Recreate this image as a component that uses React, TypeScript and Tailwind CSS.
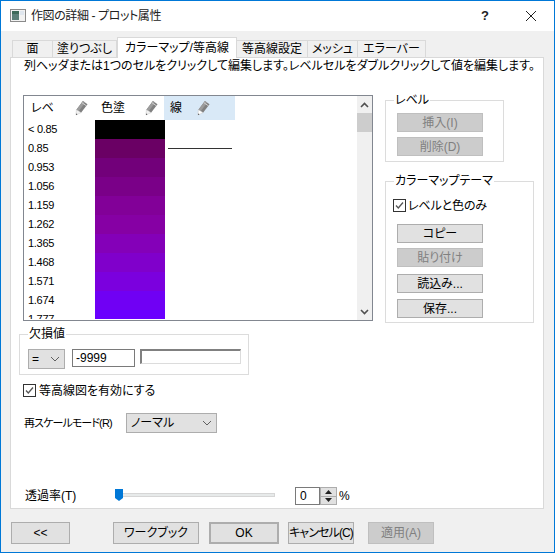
import React from "react";

function Pencil({ faded }: { faded?: boolean }) {
  return (
    <svg width="13" height="16" viewBox="0 0 14 16" className="block">
      <path d="M8.5 0.5 L13.5 4 L6.5 13 L1.5 9.8 Z" fill="#808080" />
      <path d="M8.5 0.5 L11 2.2 L4 11.5 L1.5 9.8 Z" fill="#9c9c9c" />
      <path d="M7.3 2.2 L12.2 5.6" stroke="#d4d4d4" strokeWidth="1" />
      <path d="M1.5 9.8 L6.5 13 L1 15.5 Z" fill={faded ? "#ffffff" : "#f2f2f2"} stroke="#c4c4c4" strokeWidth="0.5" />
      <path d="M1 15.5 L2.6 14.8 L1.5 13.8 Z" fill="#222222" />
    </svg>
  );
}

function Btn({ children, disabled, className = "" }: { children: React.ReactNode; disabled?: boolean; className?: string }) {
  return (
    <div
      className={
        "flex items-center justify-center whitespace-nowrap border text-[12px] leading-none " +
        (disabled ? "bg-[#cccccc] text-[#808080] border-[#bfbfbf] " : "bg-[#e1e1e1] text-black border-[#adadad] ") +
        className
      }
    >
      {children}
    </div>
  );
}

function Check() {
  return (
    <div className="flex h-[13px] w-[13px] shrink-0 items-center justify-center border border-[#333333] bg-white">
      <svg width="11" height="11" viewBox="0 0 11 11">
        <path d="M2 5.5 L4.3 8 L9 2.5" fill="none" stroke="#555555" strokeWidth="1.3" />
      </svg>
    </div>
  );
}

function Chevron() {
  return (
    <svg width="10" height="6" viewBox="0 0 10 6" className="shrink-0">
      <path d="M1 1 L5 5 L9 1" fill="none" stroke="#606060" strokeWidth="1" />
    </svg>
  );
}

function Group({ label, className = "", children }: { label: string; className?: string; children: React.ReactNode }) {
  return (
    <div className={"relative border border-[#dcdcdc] " + className}>
      <span className="absolute left-[8px] top-[-8px] whitespace-nowrap bg-white px-[1px] text-[12px] leading-[14px]">{label}</span>
      {children}
    </div>
  );
}

const rows: [string, string][] = [
  ["< 0.85", "#000000"],
  ["0.85", "#6a0064"],
  ["0.953", "#72007a"],
  ["1.056", "#7a0088"],
  ["1.159", "#820098"],
  ["1.262", "#8600a4"],
  ["1.365", "#8400b8"],
  ["1.468", "#8000cb"],
  ["1.571", "#7b00de"],
  ["1.674", "#7000f4"],
  ["1.777", "#6a00ff"],
];

const tabs = [
  { t: "面", w: "w-[41px]" },
  { t: "塗りつぶし", w: "w-[64px]" },
  { t: "カラーマップ/等高線", w: "w-[120px]", active: true },
  { t: "等高線設定", w: "w-[71px]" },
  { t: "メッシュ", w: "w-[50px]" },
  { t: "エラーバー", w: "w-[68px]" },
];

export default function App() {
  return (
    <div className="flex h-[553px] w-[555px] flex-col overflow-hidden border border-[#0078d7] bg-[#f0f0f0] font-['Liberation_Sans','Noto_Sans_CJK_JP',sans-serif] text-[12px] text-black [font-feature-settings:'palt']">
      {/* Title bar */}
      <div className="flex h-[30px] shrink-0 items-center bg-white pl-[9px]">
        <svg width="16" height="16" viewBox="0 0 16 16" className="shrink-0">
          <rect x="0.5" y="1.5" width="15" height="12" fill="#f2f2f2" stroke="#8a8a8a" />
          <rect x="2" y="3" width="7" height="9" fill="#5c7f78" />
          <rect x="2" y="3" width="7" height="3" fill="#3f6a5a" />
          <rect x="10" y="3" width="4" height="4" fill="#dfe6ee" />
        </svg>
        <span className="ml-[5px] text-[12px] tracking-[-0.4px] text-[#222222]">作図の詳細 - プロット属性</span>
        <span className="ml-auto mr-[36px] text-[13px] font-bold text-[#222222]">?</span>
        <svg width="12" height="12" viewBox="0 0 12 12" className="mr-[17px] shrink-0">
          <path d="M1 1 L11 11 M11 1 L1 11" stroke="#222222" strokeWidth="1" />
        </svg>
      </div>

      {/* Tabs */}
      <div className="mt-[7px] flex h-[19px] shrink-0 items-end pl-[11px]">
        {tabs.map((tab) =>
          tab.active ? (
            <div key={tab.t} className={"relative z-10 mb-[-1px] flex h-[21px] items-center justify-center whitespace-nowrap border border-b-0 border-[#d9d9d9] bg-white " + tab.w}>
              {tab.t}
            </div>
          ) : (
            <div key={tab.t} className={"flex h-[17px] items-center justify-center whitespace-nowrap border border-b-0 border-l-0 first:border-l border-[#d9d9d9] bg-[#f0f0f0] " + tab.w}>
              {tab.t}
            </div>
          )
        )}
      </div>

      {/* Panel */}
      <div className="ml-[9px] flex h-[452px] w-[534px] shrink-0 flex-col border border-[#d9d9d9] bg-white pl-[1px]">
        <div className="ml-[12px] h-[16px] whitespace-nowrap leading-[16px]">
          列ヘッダまたは1つのセルをクリックして編集します。レベルセルをダブルクリックして値を編集します。
        </div>

        <div className="mt-[21px] flex items-start">
          {/* Table */}
          <div className="ml-[11px] flex h-[226px] w-[350px] shrink-0 overflow-hidden border border-[#828790] bg-white">
            <div className="h-[223px] min-w-0 flex-1 overflow-hidden">
              <div className="flex h-[24px]">
                <div className="flex w-[70px] items-center justify-between pl-[7px] pr-[6px]">
                  <span>レベ</span>
                  <Pencil />
                </div>
                <div className="flex w-[70px] items-center justify-between border-l border-white pl-[6px] pr-[6px]">
                  <span>色塗</span>
                  <Pencil />
                </div>
                <div className="flex w-[71px] items-center gap-[15px] bg-[#d9e9f7] pl-[6px]">
                  <span>線</span>
                  <Pencil faded />
                </div>
              </div>
              {rows.map(([label, color], i) => (
                <div key={label} className="flex h-[19px]">
                  <div className="w-[71px] pl-[4px] text-[11px] leading-[19px] tracking-[-0.3px]">{label}</div>
                  <div className="w-[70px]" style={{ backgroundColor: color }} />
                  <div className="flex w-[70px] items-center px-[3px]">
                    {i === 1 && <div className="h-px w-full bg-[#333333]" />}
                  </div>
                </div>
              ))}
            </div>
            <div className="flex w-[15px] shrink-0 flex-col items-center bg-[#f0f0f0]">
              <div className="flex h-[17px] items-center justify-center">
                <svg width="9" height="6" viewBox="0 0 9 6"><path d="M1 5 L4.5 1.5 L8 5" fill="none" stroke="#505050" strokeWidth="1.6" /></svg>
              </div>
              <div className="h-[19px] w-full bg-[#cdcdcd]" />
              <div className="mt-auto flex h-[17px] items-center justify-center">
                <svg width="9" height="6" viewBox="0 0 9 6"><path d="M1 1 L4.5 4.5 L8 1" fill="none" stroke="#505050" strokeWidth="1.6" /></svg>
              </div>
            </div>
          </div>

          {/* Right column */}
          <div className="ml-[12px] mt-[5px] flex flex-col">
            <Group label="レベル" className="flex h-[62px] w-[119px] flex-col gap-[5px] pl-[11px] pt-[12px]">
              <Btn disabled className="h-[19px] w-[86px]">挿入(I)</Btn>
              <Btn disabled className="h-[19px] w-[86px]">削除(D)</Btn>
            </Group>
            <Group label="カラーマップテーマ" className="mt-[19px] flex h-[142px] w-[149px] flex-col pl-[11px]">
              <div className="ml-[-4px] mt-[17px] flex h-[13px] items-center gap-[2px]">
                <Check />
                <span className="whitespace-nowrap tracking-[-0.15px]">レベルと色のみ</span>
              </div>
              <Btn className="mt-[12px] h-[19px] w-[86px]">コピー</Btn>
              <Btn disabled className="mt-[5px] h-[19px] w-[86px]">貼り付け</Btn>
              <Btn className="mt-[7px] h-[19px] w-[86px]">読込み...</Btn>
              <Btn className="mt-[6px] h-[19px] w-[86px]">保存...</Btn>
            </Group>
          </div>
        </div>

        {/* Missing value */}
        <Group label="欠損値" className="ml-[7px] mt-[11px] flex h-[41px] w-[230px] items-start gap-[7px] pl-[8px] pt-[14px]">
          <div className="flex h-[20px] w-[37px] items-center justify-between border border-[#adadad] bg-[#e1e1e1] pl-[3px] pr-[4px]">
            <span>=</span>
            <Chevron />
          </div>
          <div className="flex h-[18px] w-[63px] items-center border border-[#7a7a7a] bg-white pl-[3px]">-9999</div>
          <div className="ml-[-2px] h-[15px] w-[101px] border border-t-2 border-l-2 border-[#dcdcdc] border-t-[#808080] border-l-[#808080] bg-white" />
        </Group>

        {/* Enable */}
        <div className="ml-[11px] mt-[9px] flex h-[13px] items-center gap-[3px]">
          <Check />
          <span className="whitespace-nowrap">等高線図を有効にする</span>
        </div>

        {/* Rescale */}
        <div className="ml-[12px] mt-[16px] flex items-center">
          <span className="w-[102px] whitespace-nowrap text-[11px] tracking-[-0.9px]">再スケールモード(R)</span>
          <div className="flex h-[20px] w-[91px] items-center justify-between border border-[#adadad] bg-[#e1e1e1] pl-[4px] pr-[4px]">
            <span>ノーマル</span>
            <Chevron />
          </div>
        </div>

        {/* Transparency */}
        <div className="ml-[13px] mt-[54px] flex h-[18px] items-center">
          <span className="w-[90px] whitespace-nowrap">透過率(T)</span>
          <div className="relative mb-[2px] h-[4px] w-[160px] border border-[#d6d6d6] bg-[#e7eaea]">
            <svg width="8" height="12" viewBox="0 0 8 12" className="absolute left-[-1px] top-[-5px]">
              <path d="M0 0 H8 V9 L4 12 L0 9 Z" fill="#0078d7" />
            </svg>
          </div>
          <div className="ml-[20px] flex h-[18px] w-[25px] items-center border border-[#7a7a7a] bg-white pl-[4px]">0</div>
          <div className="flex h-[18px] w-[17px] flex-col border border-[#adadad] bg-[#e1e1e1]">
            <div className="flex flex-1 items-center justify-center border-b border-[#adadad]">
              <svg width="7" height="4" viewBox="0 0 7 4"><path d="M3.5 0 L7 4 L0 4 Z" fill="#222222" /></svg>
            </div>
            <div className="flex flex-1 items-center justify-center">
              <svg width="7" height="4" viewBox="0 0 7 4"><path d="M0 0 L7 0 L3.5 4 Z" fill="#222222" /></svg>
            </div>
          </div>
          <span className="ml-[2px]">%</span>
        </div>
      </div>

      {/* Footer */}
      <div className="mt-[13px] flex items-start pl-[10px]">
        <Btn className="h-[22px] w-[59px]">&lt;&lt;</Btn>
        <Btn className="ml-[43px] h-[22px] w-[86px]">ワークブック</Btn>
        <Btn className="ml-[10px] h-[22px] w-[70px] border-[2px] border-[#0078d7]">OK</Btn>
        <Btn className="ml-[9px] h-[22px] w-[66px] text-[11px] tracking-[-0.9px]">キャンセル(C)</Btn>
        <Btn disabled className="ml-[14px] h-[22px] w-[66px]">適用(A)</Btn>
      </div>
    </div>
  );
}
